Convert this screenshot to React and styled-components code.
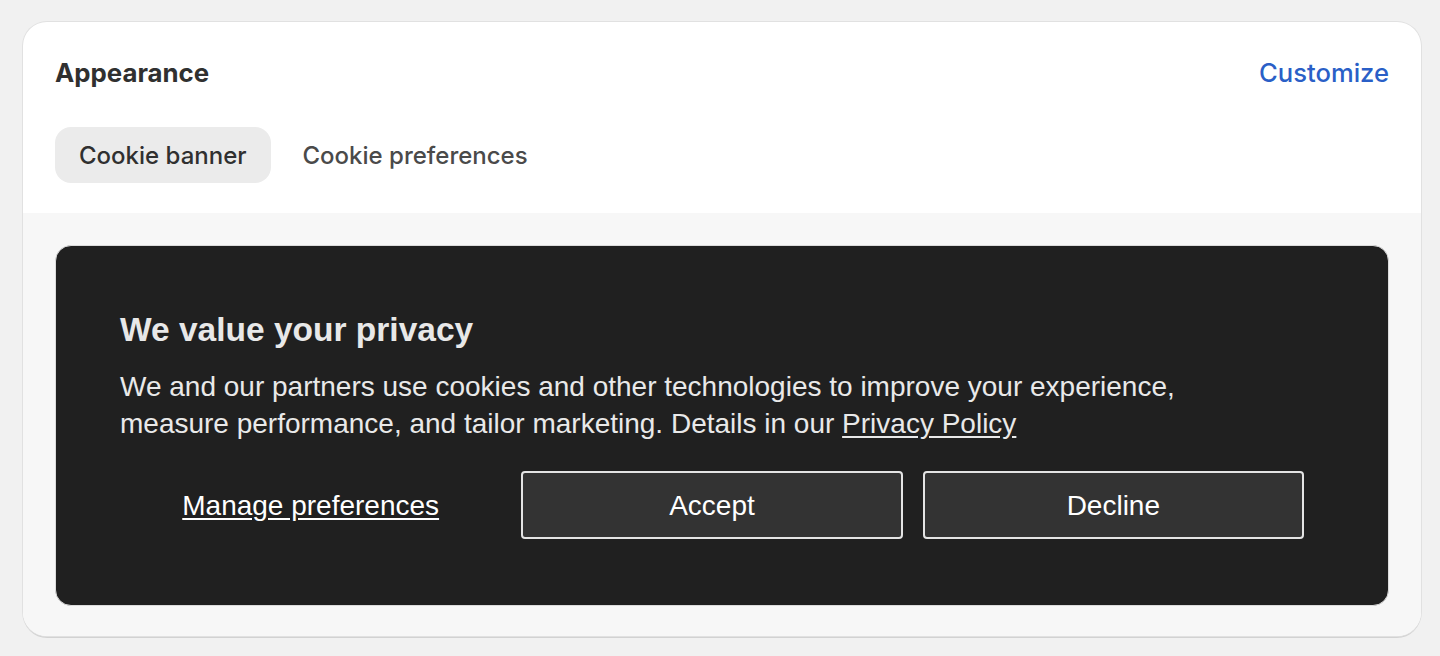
import styled, { createGlobalStyle } from "styled-components";

const GlobalStyle = createGlobalStyle`
  html, body {
    margin: 0;
    background: #f1f1f1;
  }
  body {
    font-family: Inter, "Noto Sans", sans-serif;
    -webkit-font-smoothing: antialiased;
  }
`;

export default function App() {
  return (
    <>
      <GlobalStyle />
      <Page>
        <Card>
          <CardHeader>
            <HeaderRow>
              <Title>Appearance</Title>
              <LinkButton>Customize</LinkButton>
            </HeaderRow>
            <Tabs>
              <Tab $active>Cookie banner</Tab>
              <Tab>Cookie preferences</Tab>
            </Tabs>
          </CardHeader>
          <Preview>
            <Banner>
              <BannerTitle>We value your privacy</BannerTitle>
              <BannerText>
                We and our partners use cookies and other technologies to improve your experience,
                <br />
                measure performance, and tailor marketing. Details in our <BannerLink>Privacy Policy</BannerLink>
              </BannerText>
              <Actions>
                <ManageLink>Manage preferences</ManageLink>
                <BannerButton>Accept</BannerButton>
                <BannerButton>Decline</BannerButton>
              </Actions>
            </Banner>
          </Preview>
        </Card>
      </Page>
    </>
  );
}

const Page = styled.div`
  padding: 22px 19px 18px 23px;
`;

const Card = styled.div`
  background: #ffffff;
  border-radius: 24px;
  overflow: hidden;
  box-shadow: 0 0 0 1px #e1e1e1, 0 2px 0 0 #d2d2d2;
`;

const CardHeader = styled.div`
  padding: 31px 32px 30px 32px;
  display: flex;
  flex-direction: column;
  gap: 34px;
`;

const HeaderRow = styled.div`
  display: flex;
  align-items: center;
  justify-content: space-between;
  height: 40px;
`;

const Title = styled.h2`
  margin: 0;
  font-size: 25.8px;
  line-height: 40px;
  font-weight: 650;
  color: #303030;
`;

const LinkButton = styled.span`
  font-size: 25.6px;
  line-height: 40px;
  font-weight: 450;
  color: #2a5fc7;
  cursor: pointer;
`;

const Tabs = styled.div`
  display: flex;
  gap: 8px;
`;

const Tab = styled.div`
  height: 56px;
  padding: 0 24px;
  display: flex;
  align-items: center;
  border-radius: 16px;
  font-size: 24px;
  font-weight: 550;
  color: ${(p) => (p.$active ? "#303030" : "#4a4a4a")};
  background: ${(p) => (p.$active ? "#ebebeb" : "transparent")};
  cursor: pointer;
`;

const Preview = styled.div`
  background: #f7f7f7;
  padding: 32px 32px 30px 32px;
`;

const Banner = styled.div`
  background: #202020;
  border: 1px solid #dcdcdc;
  border-radius: 16px;
  padding: 64px 84px 66px 64px;
  font-family: "Liberation Sans", Arial, sans-serif;
  color: #ebebeb;
`;

const BannerTitle = styled.h3`
  margin: 0;
  font-size: 33.5px;
  line-height: 40px;
  font-weight: 700;
  color: #e8e8e8;
`;

const BannerText = styled.p`
  margin: 18px 0 0;
  font-size: 28px;
  line-height: 37px;
  color: #e9e9e9;
`;

const BannerLink = styled.a`
  color: inherit;
  text-decoration: underline;
  text-underline-offset: 3px;
  cursor: pointer;
`;

const Actions = styled.div`
  margin-top: 29px;
  display: grid;
  grid-template-columns: repeat(3, 1fr);
  gap: 20px;
`;

const ManageLink = styled.a`
  display: flex;
  align-items: center;
  justify-content: center;
  padding-top: 2px;
  font-size: 28px;
  color: #ffffff;
  text-decoration: underline;
  text-underline-offset: 3px;
  cursor: pointer;
`;

const BannerButton = styled.button`
  height: 68px;
  padding-top: 2px;
  background: #333333;
  border: 2px solid #e4e4e4;
  border-radius: 4px;
  font-family: "Liberation Sans", Arial, sans-serif;
  font-size: 28px;
  color: #ffffff;
  cursor: pointer;
`;
